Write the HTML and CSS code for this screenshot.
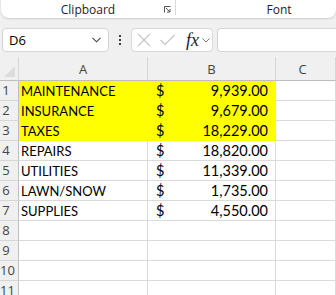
FILE: index.html
```html
<!DOCTYPE html>
<html>
<head>
  <title>Book1 - Excel</title>
  <link rel="stylesheet" href="styles.css">
</head>
<body>

<div class="ribbon">
  <div class="group clipGroup">
    <span class="groupName">Clipboard</span>
    <svg class="launcher" width="7" height="7" viewBox="0 0 7 7">
      <path d="M0.5 6.5V0.5H6.5" fill="none" stroke="#555" stroke-width="1"/>
      <path d="M2 2L6 6M6 3V6H3" fill="none" stroke="#555" stroke-width="1"/>
    </svg>
  </div>
  <div class="group fontGroup">
    <span class="groupName">Font</span>
  </div>
</div>

<div class="formulaBar">
  <div class="nameBox">
    <span>D6</span>
    <svg width="9" height="6" viewBox="0 0 9 6"><path d="M0.5 0.8L4.5 4.8L8.5 0.8" fill="none" stroke="#444" stroke-width="1.1"/></svg>
  </div>
  <div class="dots"><i></i><i></i><i></i></div>
  <div class="fxBox">
    <svg width="14" height="14" viewBox="0 0 14 14"><path d="M1 1L13 13M13 1L1 13" stroke="#c4c4c4" stroke-width="1.1"/></svg>
    <svg width="15" height="12" viewBox="0 0 15 12"><path d="M0.5 6L5 10.5L14.5 1" fill="none" stroke="#c4c4c4" stroke-width="1.1"/></svg>
    <span class="fx">fx</span>
    <svg width="8" height="5" viewBox="0 0 8 5"><path d="M0.5 0.5L4 4L7.5 0.5" fill="none" stroke="#777" stroke-width="1"/></svg>
  </div>
  <div class="formulaInput"></div>
</div>

<div class="sheet">
  <div class="corner"><div class="cornerTri"></div></div>
  <div class="colHead">A</div>
  <div class="colHead">B</div>
  <div class="colHead last">C</div>

  <div class="rowHead"><span>1</span></div>
  <div class="cell fill">MAINTENANCE</div>
  <div class="cell fill money"><span>$</span><span>9,939.00</span></div>
  <div class="cell"></div>

  <div class="rowHead"><span>2</span></div>
  <div class="cell fill">INSURANCE</div>
  <div class="cell fill money"><span>$</span><span>9,679.00</span></div>
  <div class="cell"></div>

  <div class="rowHead"><span>3</span></div>
  <div class="cell fill">TAXES</div>
  <div class="cell fill money"><span>$</span><span>18,229.00</span></div>
  <div class="cell"></div>

  <div class="rowHead"><span>4</span></div>
  <div class="cell">REPAIRS</div>
  <div class="cell money"><span>$</span><span>18,820.00</span></div>
  <div class="cell"></div>

  <div class="rowHead"><span>5</span></div>
  <div class="cell">UTILITIES</div>
  <div class="cell money"><span>$</span><span>11,339.00</span></div>
  <div class="cell"></div>

  <div class="rowHead"><span>6</span></div>
  <div class="cell">LAWN/SNOW</div>
  <div class="cell money"><span>$</span><span>1,735.00</span></div>
  <div class="cell"></div>

  <div class="rowHead"><span>7</span></div>
  <div class="cell">SUPPLIES</div>
  <div class="cell money"><span>$</span><span>4,550.00</span></div>
  <div class="cell"></div>

  <div class="rowHead"><span>8</span></div>
  <div class="cell"></div>
  <div class="cell"></div>
  <div class="cell"></div>

  <div class="rowHead"><span>9</span></div>
  <div class="cell"></div>
  <div class="cell"></div>
  <div class="cell"></div>

  <div class="rowHead"><span>10</span></div>
  <div class="cell"></div>
  <div class="cell"></div>
  <div class="cell"></div>

  <div class="rowHead"><span>11</span></div>
  <div class="cell"></div>
  <div class="cell"></div>
  <div class="cell"></div>
</div>

</body>
</html>
```

FILE: styles.css
```css
html, body {
  margin: 0;
  padding: 0;
  background-color: rgb(240, 240, 240);
  overflow: hidden;
  font-family: "Open Sans", "Noto Sans", sans-serif;
}

.ribbon {
  display: flex;
  height: 18px;
  margin-left: 1px;
  background-color: white;
  border-radius: 0 0 8px 8px;
  box-shadow: 0 1px 2px rgba(0, 0, 0, 0.15);
}

.group {
  display: flex;
  align-items: center;
  justify-content: center;
  position: relative;
  height: 15px;
}

.clipGroup {
  width: 174px;
  border-right: 1px solid rgb(218, 218, 218);
}

.fontGroup {
  flex: 1;
  padding-left: 46px;
}

.groupName {
  font-size: 12px;
  color: rgb(36, 36, 36);
  line-height: 15px;
  margin-top: 3px;
}

.launcher {
  position: absolute;
  right: 4px;
  top: 6px;
}

.formulaBar {
  display: flex;
  align-items: center;
  height: 26px;
  margin-top: 9px;
  padding-left: 2px;
}

.nameBox {
  width: 92px;
  height: 22px;
  display: flex;
  align-items: center;
  justify-content: space-between;
  padding: 0 7px 0 6px;
  background-color: white;
  border: 1px solid rgb(212, 212, 212);
  border-radius: 4px;
  font-size: 13px;
  color: black;
}

.dots {
  display: flex;
  flex-direction: column;
  gap: 2px;
  width: 3px;
  margin: 0 9px 0 10px;
}

.dots i {
  display: block;
  width: 2px;
  height: 2px;
  background-color: rgb(60, 60, 60);
}

.fxBox {
  width: 75px;
  height: 22px;
  display: flex;
  align-items: center;
  gap: 9px;
  padding-left: 5px;
  background-color: white;
  border: 1px solid rgb(218, 218, 218);
  border-radius: 4px;
}

.fxBox .fx {
  font-family: "Liberation Serif", serif;
  font-style: italic;
  font-size: 18px;
  color: rgb(30, 30, 30);
  margin-left: 2px;
  margin-right: -6px;
}

.formulaInput {
  flex: 1;
  height: 22px;
  margin-left: 4px;
  background-color: white;
  border: 1px solid rgb(212, 212, 212);
  border-right: none;
  border-radius: 4px 0 0 4px;
}

.sheet {
  display: grid;
  grid-template-columns: 19px 129px 128px 1fr;
  grid-template-rows: 24px repeat(11, 20px);
  margin-top: 4px;
  background-color: white;
}

.corner, .colHead {
  background-color: rgb(240, 240, 240);
  border-bottom: 1px solid rgb(190, 190, 190);
  border-right: 1px solid rgb(214, 214, 214);
  box-sizing: border-box;
}

.corner {
  position: relative;
}

.cornerTri {
  position: absolute;
  right: 3px;
  bottom: 3px;
  width: 0;
  height: 0;
  border-left: 11px solid transparent;
  border-bottom: 11px solid rgb(220, 220, 220);
}

.colHead {
  display: flex;
  align-items: flex-end;
  justify-content: center;
  padding-bottom: 2px;
  font-size: 13px;
  color: rgb(68, 68, 68);
}

.colHead.last {
  padding-right: 6px;
}

.rowHead {
  background-color: rgb(240, 240, 240);
  border-right: 1px solid rgb(190, 190, 190);
  border-bottom: 1px solid rgb(214, 214, 214);
  box-sizing: border-box;
  font-size: 13px;
  color: rgb(68, 68, 68);
  line-height: 19px;
  overflow: visible;
}

.rowHead span {
  display: block;
  width: 12px;
  text-align: center;
  white-space: nowrap;
}

.cell {
  border-right: 1px solid rgb(218, 218, 218);
  border-bottom: 1px solid rgb(218, 218, 218);
  box-sizing: border-box;
  font-family: Lato, "Liberation Sans", sans-serif;
  font-size: 13px;
  line-height: 20px;
  padding-left: 2px;
  color: black;
  white-space: nowrap;
}

.fill {
  background-color: rgb(255, 255, 0);
  border-color: rgb(255, 255, 0);
}

.money {
  display: flex;
  justify-content: space-between;
  padding: 0 7px 0 8px;
  font-size: 14.5px;
  line-height: 19px;
}
```
